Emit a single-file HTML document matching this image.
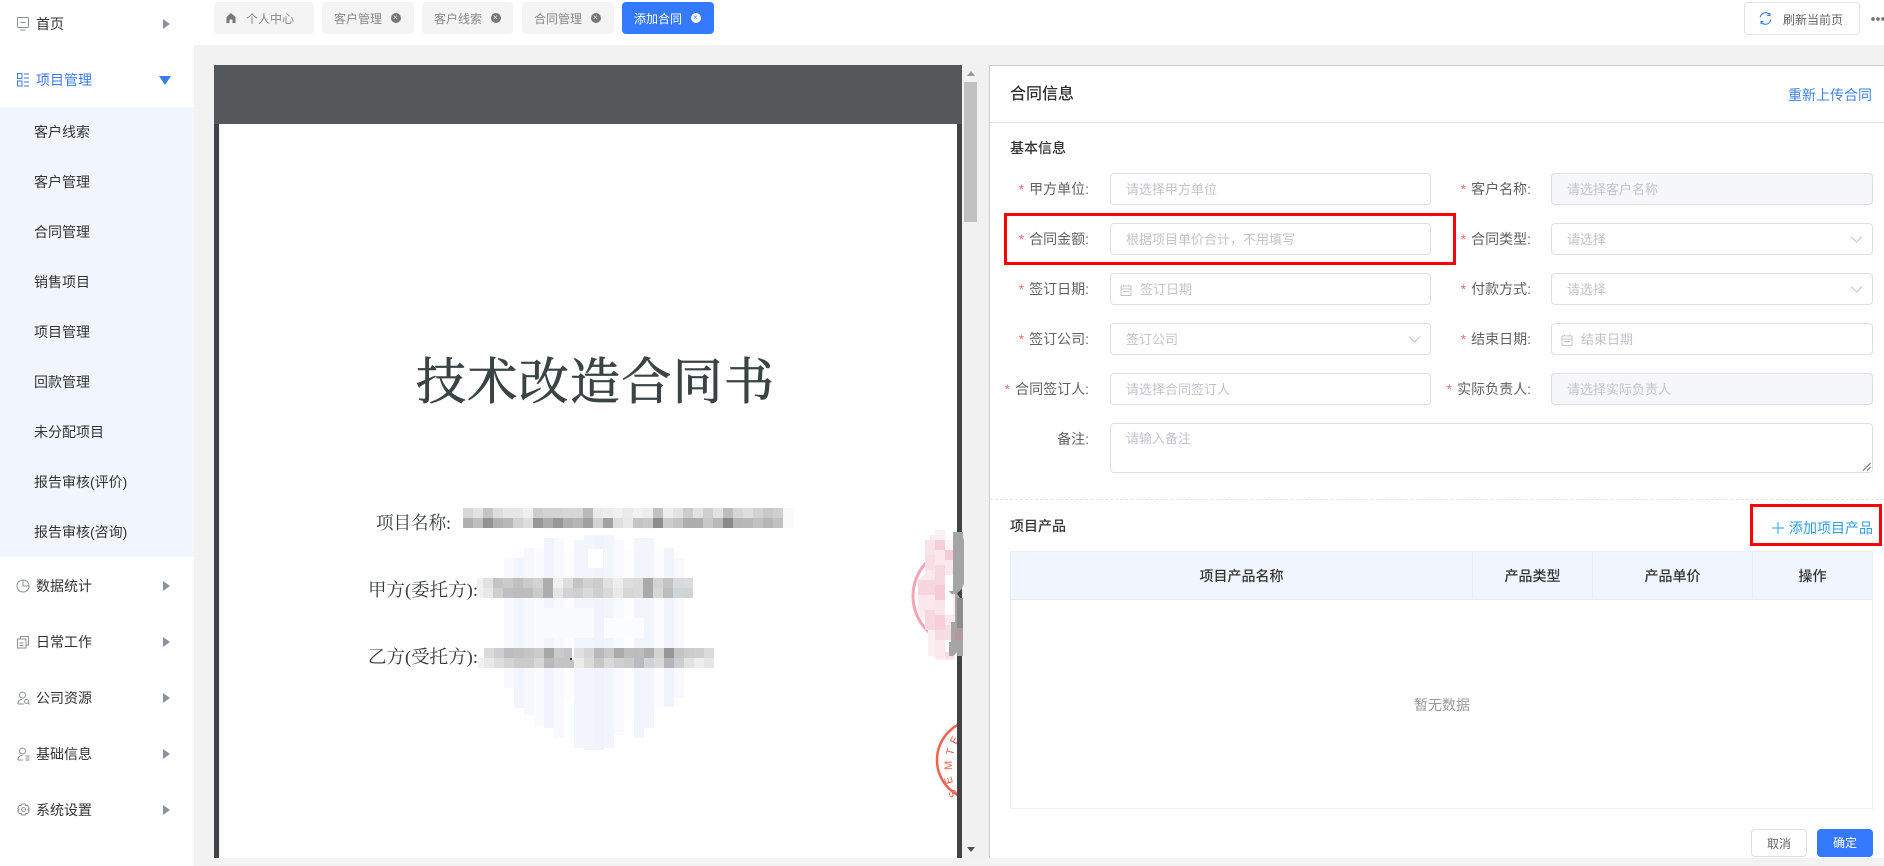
<!DOCTYPE html>
<html lang="zh"><head><meta charset="utf-8"><title>添加合同</title>
<style>
*{box-sizing:border-box}
html,body{margin:0;padding:0;width:1884px;height:866px;overflow:hidden;background:#f2f2f2}
body{position:relative;font-family:"Liberation Sans","Noto Sans CJK SC",sans-serif;font-size:14px;color:#333}
.a{position:absolute;white-space:nowrap}
#side{position:absolute;left:0;top:0;width:194px;height:866px;background:#fff}
#sub{position:absolute;left:0;top:107px;width:194px;height:450px;background:#f1f6fe}
.m{position:absolute;left:36px;height:20px;line-height:20px;font-size:14px;color:#333;white-space:nowrap}
.s{position:absolute;left:34px;height:20px;line-height:20px;font-size:14px;color:#333;white-space:nowrap}
.ar{position:absolute;left:163px;width:0;height:0;border-left:7px solid #8a93a5;border-top:5.5px solid transparent;border-bottom:5.5px solid transparent}
.ic{position:absolute;left:17px;width:12px;height:14px}
#top{position:absolute;left:194px;top:0;width:1690px;height:45px;background:#fff}
.tab{position:absolute;top:2px;height:32px;background:#f4f4f4;border-radius:4px;color:#888;font-size:12px;line-height:34px}
.tab span{position:absolute;white-space:nowrap}
.x{position:absolute;top:11px;width:10px;height:10px;border-radius:50%;background:#777}
.i{position:absolute;height:32px;background:#fff;border:1px solid #dcdfe6;border-radius:4px;font-size:13px;color:#c0c4cc;line-height:32px;padding-left:15px;white-space:nowrap}
.i.d{background:#f5f7fa}
.i.l{left:1110px;width:321px}
.i.r{left:1551px;width:322px}
.lb{position:absolute;height:20px;line-height:20px;font-size:14px;color:#606266;white-space:nowrap;text-align:right}
.lb.l{right:795px}
.lb.r{right:353px}
.lb b{font-weight:400;color:#f56c6c;margin-right:5px}
.cv{position:absolute;right:9px;top:11px;width:13px;height:9px}
.cal{position:absolute;left:9px;top:10px;width:12px;height:12px}
.th{position:absolute;top:551px;height:49px;line-height:49px;text-align:center;font-size:14px;font-weight:500;color:#333;border-right:1px solid #e9edf5}
svg rect.c{width:10px;height:10px}
</style></head><body>

<!-- sidebar -->
<div id="side">
<div id="sub"></div>
<svg class="ic" style="top:17px" viewBox="0 0 12 14" fill="none" stroke="#8a8f98" stroke-width="1"><rect x=".5" y=".5" width="11" height="10" rx="1"/><path d="M3.5 5.5h5M3.5 13h5"/></svg>
<div class="m" style="top:14px">首页</div><div class="ar" style="top:18.5px"></div>
<svg class="ic" style="top:73px" viewBox="0 0 12 14" fill="none" stroke="#3d7bf0" stroke-width="1"><rect x=".5" y=".5" width="4.5" height="5"/><rect x=".5" y="8" width="4.5" height="5"/><path d="M7 1h5M7 5h5M7 9h5M7 13h5"/></svg>
<div class="m" style="top:70px;color:#3d7bf0">项目管理</div>
<div class="a" style="left:159px;top:76px;width:0;height:0;border-top:9px solid #3d7bf0;border-left:6px solid transparent;border-right:6px solid transparent"></div>
<div class="s" style="top:122px">客户线索</div>
<div class="s" style="top:172px">客户管理</div>
<div class="s" style="top:222px">合同管理</div>
<div class="s" style="top:272px">销售项目</div>
<div class="s" style="top:322px">项目管理</div>
<div class="s" style="top:372px">回款管理</div>
<div class="s" style="top:422px">未分配项目</div>
<div class="s" style="top:472px">报告审核(评价)</div>
<div class="s" style="top:522px">报告审核(咨询)</div>

<svg class="ic" style="top:579px;height:14px;width:14px;left:16px" viewBox="0 0 14 14" fill="none" stroke="#8a8f98" stroke-width="1"><circle cx="7" cy="7" r="6"/><path d="M7 1v6h6"/></svg>
<div class="m" style="top:576px">数据统计</div><div class="ar" style="top:580.5px"></div>
<svg class="ic" style="top:635px" viewBox="0 0 12 14" fill="none" stroke="#8a8f98" stroke-width="1"><rect x=".5" y="4" width="8.5" height="9"/><path d="M3.5 4V1.5h8V10H9M2.5 8h4M2.5 10.5h4"/></svg>
<div class="m" style="top:632px">日常工作</div><div class="ar" style="top:636.5px"></div>
<svg class="ic" style="top:691px;width:13px" viewBox="0 0 13 14" fill="none" stroke="#8a8f98" stroke-width="1"><circle cx="5.5" cy="4" r="3"/><path d="M.8 13c.2-3 2-4.6 4.6-4.6"/><circle cx="9.5" cy="10.5" r="2"/><path d="M11 12l1.600 1.400M1 13h6"/></svg>
<div class="m" style="top:688px">公司资源</div><div class="ar" style="top:692.5px"></div>
<svg class="ic" style="top:747px;width:13px" viewBox="0 0 13 14" fill="none" stroke="#8a8f98" stroke-width="1"><circle cx="5.5" cy="4" r="3"/><path d="M.8 13c.2-3 2-4.6 4.6-4.6M8.500 9h4M8.500 11h4M8.500 13h4M1 13h5"/></svg>
<div class="m" style="top:744px">基础信息</div><div class="ar" style="top:748.5px"></div>
<svg class="ic" style="top:803px;width:13px" viewBox="0 0 13 14" fill="none" stroke="#8a8f98" stroke-width="1"><path d="M4.800 1h3.400l.6 1.700 1.700-.4 1.700 2.900-1.200 1.300 1.200 1.300-1.700 2.900-1.700-.4-.6 1.700H4.800l-.6-1.700-1.700.4L.8 7.800 2 6.500.8 5.200l1.700-2.900 1.700.4z"/><circle cx="6.500" cy="6.500" r="2"/></svg>
<div class="m" style="top:800px">系统设置</div><div class="ar" style="top:804.5px"></div>
</div>

<!-- top bar -->
<div id="top"></div>
<div class="tab" style="left:214px;width:100px">
<svg class="a" style="left:11px;top:10px;width:12px;height:12px" viewBox="0 0 12 12" fill="#777"><path d="M6 1L1.500 5v6h3V7.500h3V11h3V5z"/></svg>
<span style="left:32px">个人中心</span></div>
<div class="tab" style="left:322px;width:92px"><span style="left:12px">客户管理</span><i class="x" style="left:69px"></i><span style="left:71px;top:-1px;color:#eee;font-size:8px;font-style:normal">×</span></div>
<div class="tab" style="left:422px;width:91px"><span style="left:12px">客户线索</span><i class="x" style="left:69px"></i><span style="left:71px;top:-1px;color:#eee;font-size:8px">×</span></div>
<div class="tab" style="left:522px;width:92px"><span style="left:12px">合同管理</span><i class="x" style="left:69px"></i><span style="left:71px;top:-1px;color:#eee;font-size:8px">×</span></div>
<div class="tab" style="left:622px;width:92px;background:#3579ff;color:#fff"><span style="left:12px">添加合同</span><i class="x" style="left:69px;background:#fff"></i><span style="left:71px;top:-1px;color:#3579ff;font-size:8px">×</span></div>

<div class="a" style="left:1744px;top:2px;width:116px;height:33px;border:1px solid #e4e4e4;border-radius:4px;background:#fff"></div>
<svg class="a" style="left:1759px;top:12px;width:13px;height:13px" viewBox="0 0 13 13" fill="none" stroke="#4080f0" stroke-width="1.100"><path d="M1.200 5.500A5.300 5.300 0 0 1 10.800 3M11.800 7.500A5.300 5.300 0 0 1 2.200 10"/><path d="M11 .8V3.400H8.400M2 12.200V9.600h2.600"/></svg>
<div class="a" style="left:1783px;top:10px;font-size:12px;line-height:20px;color:#666">刷新当前页</div>
<div class="a" style="left:1871px;top:17px;width:13px;height:4px;background:radial-gradient(circle at 2px 2px,#777 1.700px,transparent 2px) 0 0/5px 4px repeat-x"></div>

<!-- PDF viewer -->
<div class="a" style="left:962px;top:65px;width:27px;height:793px;background:#f1f1f1"></div>
<div class="a" style="left:964px;top:82px;width:13px;height:140px;background:#c1c1c1"></div>
<div class="a" style="left:966.500px;top:71px;width:0;height:0;border-bottom:5px solid #999;border-left:4px solid transparent;border-right:4px solid transparent"></div>
<div class="a" style="left:966.500px;top:847px;width:0;height:0;border-top:5px solid #505050;border-left:4px solid transparent;border-right:4px solid transparent"></div>
<div class="a" style="left:214px;top:65px;width:748px;height:793px;background:#54585b"></div>
<div class="a" style="left:214px;top:124px;width:5px;height:734px;background:#3f4346"></div>
<div class="a" style="left:957px;top:124px;width:5px;height:734px;background:#3f4346"></div>
<div class="a" style="left:219px;top:124px;width:738px;height:734px;background:linear-gradient(90deg,#f0f3f5 0,#fbfcfd 3px,#fff 6px)"></div>

<svg class="a" style="left:0;top:0" width="1884" height="866" viewBox="0 0 1884 866" shape-rendering="crispEdges">
<defs><clipPath id="pg"><rect x="219" y="124" width="738" height="734"/></clipPath></defs>
<!-- pale mosaic -->
<g>
<rect x="504" y="558" width="10" height="130" fill="#f8f9fe"/>
<rect x="514" y="558" width="10" height="150" fill="#f1f4fc"/>
<rect x="524" y="548" width="10" height="167" fill="#f7f8fe"/>
<rect x="534" y="548" width="10" height="179" fill="#fafbfe"/>
<rect x="544" y="538" width="10" height="190" fill="#f1f4fc"/>
<rect x="554" y="538" width="10" height="200" fill="#f8f9fe"/>
<rect x="564" y="550" width="10" height="150" fill="#fdfdff"/>
<rect x="574" y="540" width="10" height="208" fill="#f3f5fc"/>
<rect x="584" y="535" width="10" height="215" fill="#f3f5fc"/>
<rect x="594" y="535" width="10" height="215" fill="#f0f3fc"/>
<rect x="604" y="535" width="10" height="213" fill="#f3f5fc"/>
<rect x="614" y="540" width="10" height="195" fill="#f9fafe"/>
<rect x="624" y="550" width="10" height="170" fill="#fdfdff"/>
<rect x="634" y="538" width="10" height="200" fill="#f3f5fc"/>
<rect x="644" y="538" width="10" height="190" fill="#f3f5fc"/>
<rect x="654" y="548" width="10" height="160" fill="#fcfcff"/>
<rect x="664" y="548" width="10" height="159" fill="#f0f3fc"/>
<rect x="674" y="558" width="10" height="140" fill="#f8f9fe"/>
<rect x="588" y="549" width="15" height="19" fill="#fff"/>
<rect x="544" y="608" width="50" height="30" fill="#fafbff"/>
<rect x="604" y="618" width="40" height="20" fill="#fbfcff"/>
</g>
<!-- row 1 mosaic -->
<g opacity=".92">
<rect x="783" y="508" width="11" height="20" fill="#fafafa"/>
<rect class="c" x="463" y="508" fill="#d4d4d4"/><rect class="c" x="473" y="508" fill="#e0e0e0"/><rect class="c" x="483" y="508" fill="#c0c0c0"/><rect class="c" x="493" y="508" fill="#dcdcdc"/><rect class="c" x="503" y="508" fill="#e6e6e6"/><rect class="c" x="513" y="508" fill="#e4e4e4"/><rect class="c" x="523" y="508" fill="#eeeeee"/><rect class="c" x="533" y="508" fill="#c8c8c8"/><rect class="c" x="543" y="508" fill="#d0d0d0"/><rect class="c" x="553" y="508" fill="#d0d0d0"/><rect class="c" x="563" y="508" fill="#d4d4d4"/><rect class="c" x="573" y="508" fill="#d4d4d4"/><rect class="c" x="583" y="508" fill="#b4b4b4"/><rect class="c" x="593" y="508" fill="#e8e8e8"/><rect class="c" x="603" y="508" fill="#ececec"/><rect class="c" x="613" y="508" fill="#f0f0f0"/><rect class="c" x="623" y="508" fill="#eaeaea"/><rect class="c" x="633" y="508" fill="#f0f0f0"/><rect class="c" x="643" y="508" fill="#ececec"/><rect class="c" x="653" y="508" fill="#bcbcbc"/><rect class="c" x="663" y="508" fill="#ececec"/><rect class="c" x="673" y="508" fill="#e0e0e0"/><rect class="c" x="683" y="508" fill="#c8c8c8"/><rect class="c" x="693" y="508" fill="#e0e0e0"/><rect class="c" x="703" y="508" fill="#cccccc"/><rect class="c" x="713" y="508" fill="#e0e0e0"/><rect class="c" x="723" y="508" fill="#b8b8b8"/><rect class="c" x="733" y="508" fill="#d4d4d4"/><rect class="c" x="743" y="508" fill="#dcdcdc"/><rect class="c" x="753" y="508" fill="#d0d0d0"/><rect class="c" x="763" y="508" fill="#c4c4c4"/><rect class="c" x="773" y="508" fill="#cccccc"/>
<rect class="c" x="463" y="518" fill="#a9a9a9"/><rect class="c" x="473" y="518" fill="#b9b9b9"/><rect class="c" x="483" y="518" fill="#8a8a8a"/><rect class="c" x="493" y="518" fill="#aaaaaa"/><rect class="c" x="503" y="518" fill="#b4b4b4"/><rect class="c" x="513" y="518" fill="#cfcfcf"/><rect class="c" x="523" y="518" fill="#dcdcdc"/><rect class="c" x="533" y="518" fill="#8f8f8f"/><rect class="c" x="543" y="518" fill="#a5a5a5"/><rect class="c" x="553" y="518" fill="#8f8f8f"/><rect class="c" x="563" y="518" fill="#aaaaaa"/><rect class="c" x="573" y="518" fill="#b0b0b0"/><rect class="c" x="583" y="518" fill="#989898"/><rect class="c" x="593" y="518" fill="#d0d0d0"/><rect class="c" x="603" y="518" fill="#9a9a9a"/><rect class="c" x="613" y="518" fill="#dcdcdc"/><rect class="c" x="623" y="518" fill="#e8e8e8"/><rect class="c" x="633" y="518" fill="#bfbfbf"/><rect class="c" x="643" y="518" fill="#c4c4c4"/><rect class="c" x="653" y="518" fill="#848484"/><rect class="c" x="663" y="518" fill="#c8c8c8"/><rect class="c" x="673" y="518" fill="#c0c0c0"/><rect class="c" x="683" y="518" fill="#a8a8a8"/><rect class="c" x="693" y="518" fill="#a8a8a8"/><rect class="c" x="703" y="518" fill="#c4c4c4"/><rect class="c" x="713" y="518" fill="#b4b4b4"/><rect class="c" x="723" y="518" fill="#808080"/><rect class="c" x="733" y="518" fill="#b0b0b0"/><rect class="c" x="743" y="518" fill="#b4b4b4"/><rect class="c" x="753" y="518" fill="#bcbcbc"/><rect class="c" x="763" y="518" fill="#b0b0b0"/><rect class="c" x="773" y="518" fill="#bcbcbc"/>
</g>
<!-- row 2 mosaic -->
<g opacity=".92">
<rect x="477" y="578" width="6" height="20" fill="#f0f0f0"/>
<rect class="c" x="483" y="578" fill="#e0e0e0"/><rect class="c" x="493" y="578" fill="#c0c0c0"/><rect class="c" x="503" y="578" fill="#c8c8c8"/><rect class="c" x="513" y="578" fill="#bcbcbc"/><rect class="c" x="523" y="578" fill="#c8c8c8"/><rect class="c" x="533" y="578" fill="#d0d0d0"/><rect class="c" x="543" y="578" fill="#a8a8a8"/><rect class="c" x="553" y="578" fill="#f0f0f0"/><rect class="c" x="563" y="578" fill="#dcdcdc"/><rect class="c" x="573" y="578" fill="#c0c0c0"/><rect class="c" x="583" y="578" fill="#d0d0d0"/><rect class="c" x="593" y="578" fill="#c8c8c8"/><rect class="c" x="603" y="578" fill="#e0e0e0"/><rect class="c" x="613" y="578" fill="#eeeeee"/><rect class="c" x="623" y="578" fill="#dcdcdc"/><rect class="c" x="633" y="578" fill="#d8d8d8"/><rect class="c" x="643" y="578" fill="#a4a4a4"/><rect class="c" x="653" y="578" fill="#d0d0d0"/><rect class="c" x="663" y="578" fill="#c0c0c0"/><rect class="c" x="673" y="578" fill="#d8d8d8"/><rect class="c" x="683" y="578" fill="#d8d8d8"/>
<rect class="c" x="483" y="588" fill="#e8e8e8"/><rect class="c" x="493" y="588" fill="#cccccc"/><rect class="c" x="503" y="588" fill="#bbbbbb"/><rect class="c" x="513" y="588" fill="#b8b8b8"/><rect class="c" x="523" y="588" fill="#b8b8b8"/><rect class="c" x="533" y="588" fill="#c8c8c8"/><rect class="c" x="543" y="588" fill="#a8a8a8"/><rect class="c" x="553" y="588" fill="#e4e4e4"/><rect class="c" x="563" y="588" fill="#d0d0d0"/><rect class="c" x="573" y="588" fill="#cccccc"/><rect class="c" x="583" y="588" fill="#d8d8d8"/><rect class="c" x="593" y="588" fill="#cccccc"/><rect class="c" x="603" y="588" fill="#d8d8d8"/><rect class="c" x="613" y="588" fill="#e8e8e8"/><rect class="c" x="623" y="588" fill="#d4d4d4"/><rect class="c" x="633" y="588" fill="#d8d8d8"/><rect class="c" x="643" y="588" fill="#a4a4a4"/><rect class="c" x="653" y="588" fill="#d4d4d4"/><rect class="c" x="663" y="588" fill="#b8b8b8"/><rect class="c" x="673" y="588" fill="#ccd4d8"/><rect class="c" x="683" y="588" fill="#d0d0d0"/>
</g>
<!-- row 3 mosaic -->
<g opacity=".92">
<rect x="478" y="658" width="6" height="10" fill="#f0f0f0"/>
<rect class="c" x="484" y="648" fill="#d8d8d8"/><rect class="c" x="494" y="648" fill="#cccccc"/><rect class="c" x="504" y="648" fill="#b8b8b8"/><rect class="c" x="514" y="648" fill="#bcbcbc"/><rect class="c" x="524" y="648" fill="#c0c0c0"/><rect class="c" x="534" y="648" fill="#c8c8c8"/><rect class="c" x="544" y="648" fill="#a0a0a0"/><rect class="c" x="554" y="648" fill="#c8c8c8"/><rect class="c" x="564" y="648" fill="#c0c0c0"/><rect class="c" x="574" y="648" fill="#e0e0e0"/><rect class="c" x="584" y="648" fill="#d4d4d4"/><rect class="c" x="594" y="648" fill="#b4b4b4"/><rect class="c" x="604" y="648" fill="#c4c4c4"/><rect class="c" x="614" y="648" fill="#a4a4a4"/><rect class="c" x="624" y="648" fill="#b8b8b8"/><rect class="c" x="634" y="648" fill="#b8b8b8"/><rect class="c" x="644" y="648" fill="#a8a8a8"/><rect class="c" x="654" y="648" fill="#d0d0d0"/><rect class="c" x="664" y="648" fill="#909090"/><rect class="c" x="674" y="648" fill="#c0c0c0"/><rect class="c" x="684" y="648" fill="#c8c8c8"/><rect class="c" x="694" y="648" fill="#cccccc"/><rect class="c" x="704" y="648" fill="#d8d8d8"/>
<rect class="c" x="484" y="658" fill="#e8e8e8"/><rect class="c" x="494" y="658" fill="#dcdcdc"/><rect class="c" x="504" y="658" fill="#d0d0d0"/><rect class="c" x="514" y="658" fill="#c8c8c8"/><rect class="c" x="524" y="658" fill="#c8c8c8"/><rect class="c" x="534" y="658" fill="#d4d4d4"/><rect class="c" x="544" y="658" fill="#b4b4b8"/><rect class="c" x="554" y="658" fill="#c0c0c4"/><rect class="c" x="564" y="658" fill="#c0c0c0"/><rect class="c" x="574" y="658" fill="#ececec"/><rect class="c" x="584" y="658" fill="#d8d8d8"/><rect class="c" x="594" y="658" fill="#c4c4c4"/><rect class="c" x="604" y="658" fill="#d8d8d8"/><rect class="c" x="614" y="658" fill="#cccccc"/><rect class="c" x="624" y="658" fill="#c4c8cc"/><rect class="c" x="634" y="658" fill="#b4b8bc"/><rect class="c" x="644" y="658" fill="#ccd0d4"/><rect class="c" x="654" y="658" fill="#d8d8d8"/><rect class="c" x="664" y="658" fill="#b0b0b4"/><rect class="c" x="674" y="658" fill="#c8ccd0"/><rect class="c" x="684" y="658" fill="#e0e0e0"/><rect class="c" x="694" y="658" fill="#ececec"/><rect class="c" x="704" y="658" fill="#e4e4e4"/>
<rect x="572" y="646" width="2" height="14" fill="#fff"/><rect x="570" y="658" width="2" height="2" fill="#222"/>
</g>
<!-- document text -->
<g shape-rendering="auto" fill="#333b3b" font-family="'Liberation Serif','Noto Serif CJK SC',serif">
<text x="416" y="399" font-size="50" textLength="358" lengthAdjust="spacing" font-family="'Noto Serif CJK SC',serif" fill="#3a4444" stroke="#3a4444" stroke-width=".7">技术改造合同书</text>
<text x="376" y="529" font-size="18" textLength="75" lengthAdjust="spacingAndGlyphs">项目名称:</text>
<text x="368" y="596" font-size="18" textLength="110" lengthAdjust="spacingAndGlyphs">甲方(委托方):</text>
<text x="368" y="663" font-size="18" textLength="110" lengthAdjust="spacingAndGlyphs">乙方(受托方):</text>
</g>
<!-- stamps -->
<g clip-path="url(#pg)" shape-rendering="auto">
<ellipse cx="960" cy="596" rx="47" ry="48" fill="none" stroke="#f4a4b2" stroke-width="3"/>
<circle cx="977" cy="760" r="40" fill="none" stroke="#f4604f" stroke-width="2.500"/>
<g fill="#f4604f" font-family="'Liberation Sans',sans-serif" font-size="11">
<text transform="translate(956 745) rotate(-62)">E</text>
<text transform="translate(953 756) rotate(-75)">T</text>
<text transform="translate(952 770) rotate(-90)">M</text>
<text transform="translate(953 783) rotate(-105)">E</text>
<text transform="translate(958 795) rotate(-120)">S</text>
</g>
</g>
<!-- pink mosaic -->
<g>
<path d="M930 535h25v125h-18l-9-10v-30l-10-5v-35l10-10z" fill="#fbeaee"/>
<rect x="925" y="540" width="10" height="15" fill="#f8e4e8"/><rect x="925" y="555" width="10" height="15" fill="#f8dfe5"/><rect x="925" y="570" width="10" height="10" fill="#fae8ec"/><rect x="918" y="580" width="17" height="15" fill="#f7d6dd"/><rect x="918" y="595" width="17" height="15" fill="#fae8ec"/><rect x="925" y="610" width="10" height="20" fill="#f8d8e0"/><rect x="928" y="630" width="7" height="26" fill="#fbeef1"/>
<rect x="935" y="530" width="10" height="10" fill="#fbeef0"/><rect x="935" y="540" width="10" height="10" fill="#f4cfd8"/><rect x="935" y="550" width="10" height="15" fill="#fbe8ec"/><rect x="935" y="565" width="10" height="20" fill="#f6d8df"/><rect x="935" y="585" width="10" height="15" fill="#f5ccd6"/><rect x="935" y="600" width="10" height="15" fill="#fae6ea"/><rect x="935" y="615" width="10" height="15" fill="#f5d0d8"/><rect x="935" y="630" width="10" height="10" fill="#f7dde3"/><rect x="935" y="640" width="10" height="18" fill="#fbe9ec"/>
<rect x="945" y="530" width="10" height="10" fill="#fff"/><rect x="945" y="540" width="10" height="10" fill="#fdf4f5"/><rect x="945" y="550" width="10" height="10" fill="#f5ccd6"/><rect x="945" y="560" width="10" height="15" fill="#fbe8ec"/><rect x="945" y="575" width="8" height="40" fill="#fff"/><rect x="945" y="615" width="10" height="10" fill="#fbe8ec"/><rect x="945" y="625" width="10" height="15" fill="#f7dee3"/><rect x="945" y="640" width="10" height="12" fill="#fff"/><rect x="945" y="652" width="8" height="6" fill="#f7dee3"/>
<path d="M953 532h8l3 8v44l-3 6-4 3 3 5 1 8v26l-2 18-6 6h-4v-14h2v-20h4v-28h-4l-2-3h4v-50z" fill="#a5a5a5"/>
<rect x="953" y="532" width="10" height="50" fill="#a5a5a5"/><rect x="957" y="598" width="6" height="30" fill="#8c8c8c"/><rect x="955" y="628" width="8" height="12" fill="#b09a9e"/><rect x="957" y="640" width="6" height="16" fill="#a5a5a5"/>
</g>
</svg>

<!-- right panel -->
<div class="a" style="left:989px;top:65px;width:895px;height:793px;background:#fff;border-left:1px solid #ccc;border-top:1px solid #ccc"></div>
<div class="a" style="left:990px;top:122px;width:894px;height:1px;background:#e4e4ec"></div>
<div class="a" style="left:1010px;top:84px;font-size:16px;line-height:22px;font-weight:500;color:#303133">合同信息</div>
<div class="a" style="left:1788px;top:85px;font-size:14px;line-height:20px;color:#4080f0">重新上传合同</div>
<div class="a" style="left:1010px;top:138px;font-size:14px;line-height:20px;font-weight:500;color:#333">基本信息</div>

<div class="lb l" style="top:179px"><b>*</b>甲方单位:</div>
<div class="i l" style="top:173px">请选择甲方单位</div>
<div class="lb r" style="top:179px"><b>*</b>客户名称:</div>
<div class="i r d" style="top:173px">请选择客户名称</div>

<div class="lb l" style="top:229px"><b>*</b>合同金额:</div>
<div class="i l" style="top:223px">根据项目单价合计，不用填写</div>
<div class="lb r" style="top:229px"><b>*</b>合同类型:</div>
<div class="i r" style="top:223px">请选择<svg class="cv" viewBox="0 0 13 9" fill="none" stroke="#c0c4cc"><path d="M1 1.500l5.500 5.500L12 1.500"/></svg></div>

<div class="lb l" style="top:279px"><b>*</b>签订日期:</div>
<div class="i l" style="top:273px;padding-left:29px"><svg class="cal" viewBox="0 0 12 12" fill="none" stroke="#c0c4cc"><rect x="1" y="2" width="10" height="9.500"/><path d="M1 5h10M3.500 .5v2M8.500 .5v2M3 7.500h6"/></svg>签订日期</div>
<div class="lb r" style="top:279px"><b>*</b>付款方式:</div>
<div class="i r" style="top:273px">请选择<svg class="cv" viewBox="0 0 13 9" fill="none" stroke="#c0c4cc"><path d="M1 1.500l5.500 5.500L12 1.500"/></svg></div>

<div class="lb l" style="top:329px"><b>*</b>签订公司:</div>
<div class="i l" style="top:323px">签订公司<svg class="cv" viewBox="0 0 13 9" fill="none" stroke="#c0c4cc"><path d="M1 1.500l5.500 5.500L12 1.500"/></svg></div>
<div class="lb r" style="top:329px"><b>*</b>结束日期:</div>
<div class="i r" style="top:323px;padding-left:29px"><svg class="cal" viewBox="0 0 12 12" fill="none" stroke="#c0c4cc"><rect x="1" y="2" width="10" height="9.500"/><path d="M1 5h10M3.500 .5v2M8.500 .5v2M3 7.500h6"/></svg>结束日期</div>

<div class="lb l" style="top:379px"><b>*</b>合同签订人:</div>
<div class="i l" style="top:373px">请选择合同签订人</div>
<div class="lb r" style="top:379px"><b>*</b>实际负责人:</div>
<div class="i r d" style="top:373px">请选择实际负责人</div>

<div class="lb l" style="top:429px">备注:</div>
<div class="i" style="left:1110px;top:423px;width:763px;height:50px;line-height:30px">请输入备注
<svg class="a" style="right:1px;bottom:1px;width:9px;height:9px" viewBox="0 0 9 9" stroke="#666" fill="none"><path d="M1 8.500L8.500 1M5 8.500L8.500 5"/></svg></div>

<div class="a" style="left:990px;top:499px;width:894px;border-top:1px dashed #e4e4ec"></div>
<div class="a" style="left:1010px;top:516px;font-size:14px;line-height:20px;font-weight:500;color:#333">项目产品</div>
<svg class="a" style="left:1772px;top:522px;width:12px;height:12px" viewBox="0 0 12 12" stroke="#2d9be8" fill="none"><path d="M6 0v12M0 6h12"/></svg>
<div class="a" style="left:1789px;top:518px;font-size:14px;line-height:20px;color:#2d9be8">添加项目产品</div>

<div class="a" style="left:1010px;top:551px;width:863px;height:258px;border:1px solid #edf0f7;background:#fff"></div>
<div class="th" style="left:1010px;width:463px;background:#f1f5fe;border-left:1px solid #e9edf5;border-top:1px solid #e9edf5;border-bottom:1px solid #e4e9f2">项目产品名称</div>
<div class="th" style="left:1473px;width:120px;background:#f1f5fe;border-top:1px solid #e9edf5;border-bottom:1px solid #e4e9f2">产品类型</div>
<div class="th" style="left:1593px;width:160px;background:#f1f5fe;border-top:1px solid #e9edf5;border-bottom:1px solid #e4e9f2">产品单价</div>
<div class="th" style="left:1753px;width:120px;background:#f1f5fe;border-top:1px solid #e9edf5;border-bottom:1px solid #e4e9f2">操作</div>
<div class="a" style="left:1414px;top:695px;font-size:14px;line-height:20px;color:#999">暂无数据</div>

<div class="a" style="left:1751px;top:829px;width:56px;height:28px;border:1px solid #dcdfe6;border-radius:4px;background:#fff;text-align:center;line-height:28px;font-size:12px;color:#666">取消</div>
<div class="a" style="left:1817px;top:829px;width:56px;height:28px;border-radius:4px;background:#3579ff;text-align:center;line-height:29px;font-size:12px;color:#fff">确定</div>

<!-- red annotation boxes -->
<div class="a" style="left:1004px;top:213px;width:452px;height:52px;border:3px solid #f00"></div>
<div class="a" style="left:1750px;top:504px;width:132px;height:42px;border:3px solid #f00"></div>
</body></html>
